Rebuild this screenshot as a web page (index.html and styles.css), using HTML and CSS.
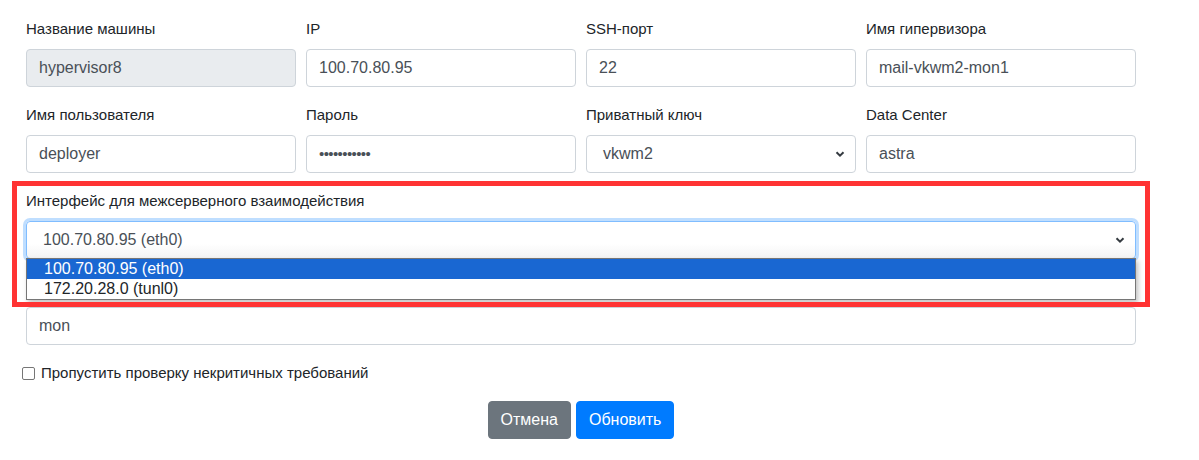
FILE: index.html
```html
<!DOCTYPE html>
<html lang="ru">
<head>
<meta charset="utf-8">
<title>Обновить гипервизор</title>
<link rel="stylesheet" href="styles.css">
</head>
<body>
<div class="page">
  <form class="form">
    <div class="grid">
      <div class="group">
        <label class="label">Название машины</label>
        <div class="control disabled">hypervisor8</div>
      </div>
      <div class="group">
        <label class="label">IP</label>
        <div class="control">100.70.80.95</div>
      </div>
      <div class="group">
        <label class="label">SSH-порт</label>
        <div class="control">22</div>
      </div>
      <div class="group">
        <label class="label">Имя гипервизора</label>
        <div class="control">mail-vkwm2-mon1</div>
      </div>
      <div class="group">
        <label class="label">Имя пользователя</label>
        <div class="control">deployer</div>
      </div>
      <div class="group">
        <label class="label">Пароль</label>
        <div class="control password">•••••••••••</div>
      </div>
      <div class="group">
        <label class="label">Приватный ключ</label>
        <div class="control select"><span class="sel-text">vkwm2</span>
          <svg class="chev" width="10" height="8" viewBox="0 0 10 8"><path d="M1.5 2.2 L5 5.6 L8.5 2.2" fill="none" stroke="#343a40" stroke-width="2"/></svg>
        </div>
      </div>
      <div class="group">
        <label class="label">Data Center</label>
        <div class="control">astra</div>
      </div>
    </div>

    <div class="group wide iface">
      <label class="label">Интерфейс для межсерверного взаимодействия</label>
      <div class="control select focus"><span class="sel-text">100.70.80.95 (eth0)</span>
        <svg class="chev" width="10" height="8" viewBox="0 0 10 8"><path d="M1.5 2.2 L5 5.6 L8.5 2.2" fill="none" stroke="#343a40" stroke-width="2"/></svg>
      </div>
      <ul class="listbox">
        <li class="opt active">100.70.80.95 (eth0)</li>
        <li class="opt">172.20.28.0 (tunl0)</li>
      </ul>
      <div class="highlight"></div>
    </div>

    <div class="group wide">
      <div class="label-spacer"></div>
      <div class="control">mon</div>
    </div>

    <div class="check-row">
      <span class="checkbox"></span>
      <span class="check-label">Пропустить проверку некритичных требований</span>
    </div>

    <div class="actions">
      <button type="button" class="btn btn-secondary">Отмена</button>
      <button type="button" class="btn btn-primary">Обновить</button>
    </div>
  </form>
</div>
</body>
</html>
```
FILE: styles.css
```css
* { box-sizing: border-box; }
html, body { margin: 0; padding: 0; background: #fff; }
body {
  font-family: "Liberation Sans", Arial, sans-serif;
  font-size: 16px;
  line-height: 1.5;
  color: #212529;
}
.page { width: 1199px; height: 460px; overflow: hidden; }
.form { padding: 17px 0 0 26px; width: 1136px; }
.grid {
  display: grid;
  grid-template-columns: repeat(4, 270px);
  column-gap: 10px;
}
.group { display: flex; flex-direction: column; margin-bottom: 16px; position: relative; }
.label { font-size: 15px; line-height: 24px; margin-bottom: 8px; color: #212529; }
.label-spacer { height: 24px; margin-bottom: 8px; }
.control {
  height: 38px;
  border: 1px solid #ced4da;
  border-radius: 4px;
  padding: 0 12px;
  font-size: 16px;
  line-height: 36px;
  color: #495057;
  background: #fff;
  white-space: nowrap;
}
.control.disabled { background: #e9ecef; }
.control.password { font-size: 15px; letter-spacing: -0.6px; }
.select { display: flex; align-items: center; justify-content: space-between; padding-right: 10px; }
.sel-text { padding-left: 4px; }
.chev { flex: none; }
.wide { width: 1110px; }
.control.focus {
  border-color: #80bdff;
  box-shadow: 0 0 0 3px rgba(0,123,255,.25);
  background: linear-gradient(#fff 60%, #f4f4f4);
}
.listbox {
  position: absolute;
  left: 0; right: 0;
  top: 69px;
  margin: 0; padding: 0;
  list-style: none;
  border: 1px solid #767676;
  background: #fff;
  box-shadow: 2px 3px 5px rgba(0,0,0,.25);
  z-index: 5;
}
.opt { height: 20px; line-height: 20px; padding-left: 17px; font-size: 16px; color: #212529; }
.opt.active { background: #1967d2; color: #fff; }
.highlight {
  position: absolute;
  left: -14px; top: -8px;
  width: 1138px; height: 126px;
  border: 5px solid #ff3333;
  z-index: 6;
  pointer-events: none;
}
.check-row { display: flex; align-items: center; height: 24px; margin-left: -4px; margin-bottom: 16px; }
.checkbox {
  width: 13px; height: 13px;
  border: 1px solid #767676;
  border-radius: 2px;
  margin-right: 6px;
  background: #fff;
}
.check-label { font-size: 15px; color: #212529; }
.actions { display: flex; justify-content: center; gap: 5px; }
.btn {
  font-family: inherit;
  font-size: 16px;
  line-height: 24px;
  padding: 6px 12px;
  border: 1px solid transparent;
  border-radius: 4px;
  color: #fff;
  height: 38px;
}
.btn-secondary { background: #6c757d; border-color: #6c757d; }
.btn-primary { background: #007bff; border-color: #007bff; }
```
